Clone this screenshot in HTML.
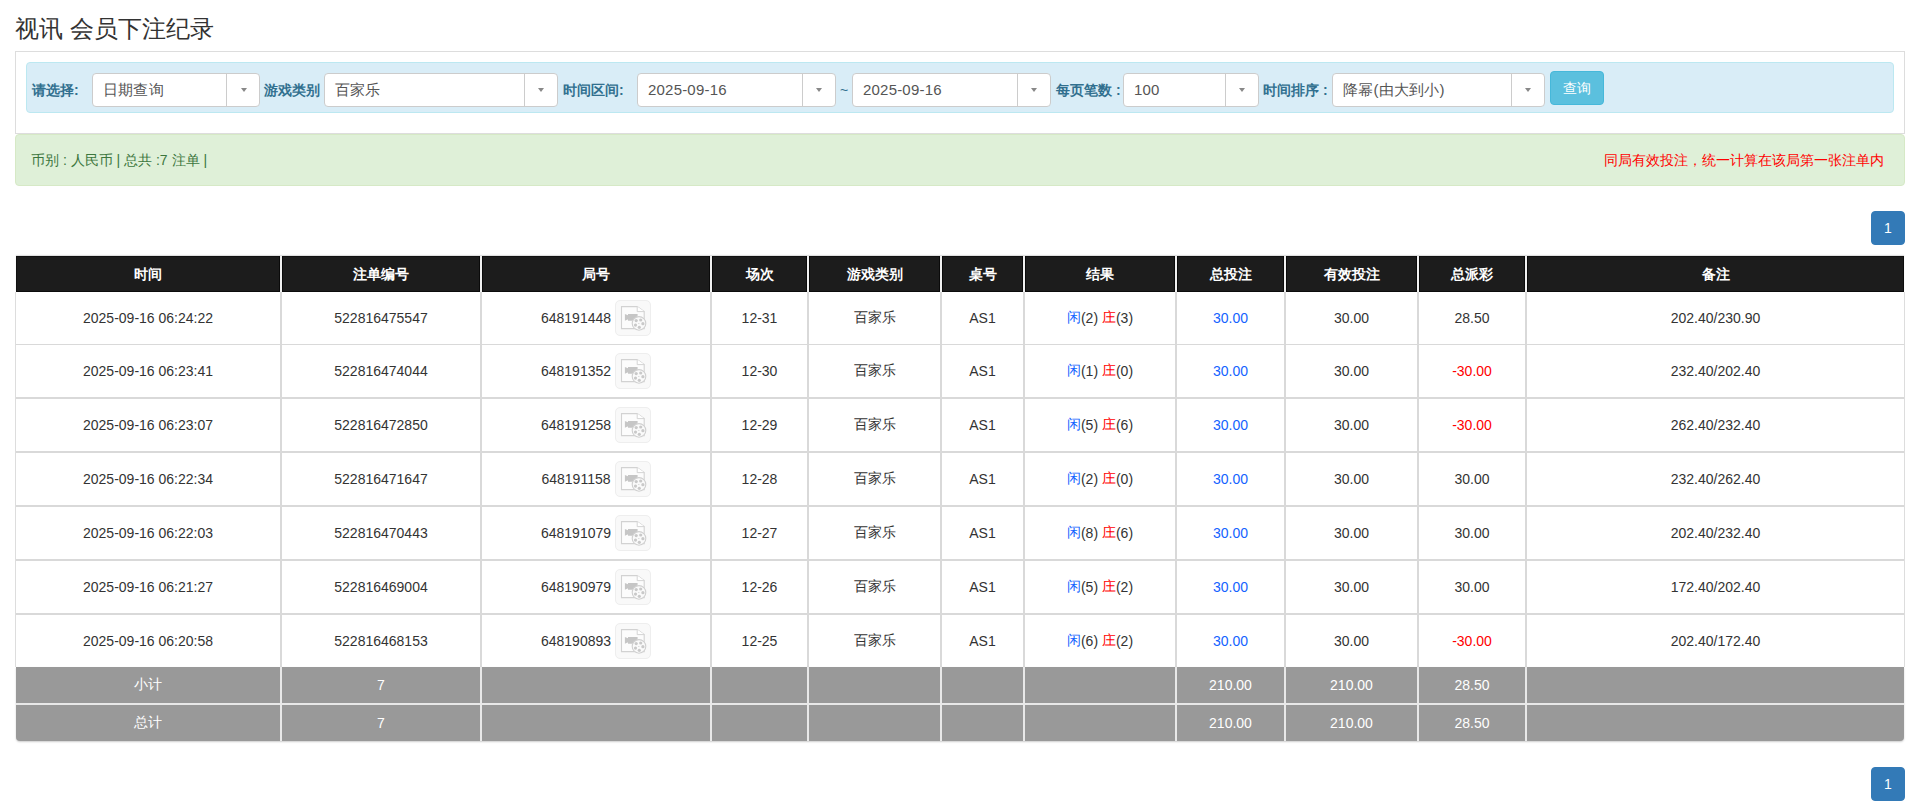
<!DOCTYPE html>
<html><head><meta charset="utf-8">
<style>
*{box-sizing:border-box;margin:0;padding:0}
html,body{width:1919px;height:805px;overflow:hidden;background:#fff}
body{font-family:"Liberation Sans",sans-serif;font-size:14px;color:#333;position:relative}
.abs{position:absolute}
h1{position:absolute;left:15px;top:13px;font-size:24px;font-weight:normal;color:#333;line-height:32px;white-space:nowrap}
.panel{position:absolute;left:15px;top:51px;width:1890px;height:83px;border:1px solid #ddd}
.well{position:absolute;left:26px;top:62px;width:1868px;height:51px;background:#d9edf7;border:1px solid #bce8f1;border-radius:4px}
.lbl{position:absolute;top:81px;font-size:14px;font-weight:bold;color:#31708f;line-height:18px;white-space:nowrap}
.sel{position:absolute;top:73px;height:34px;background:#fff;border:1px solid #ccc;border-radius:4px}
.sel .t{position:absolute;left:10px;top:7px;font-size:15px;line-height:18px;color:#555;white-space:nowrap;letter-spacing:.2px}
.sel .d{position:absolute;top:0;bottom:0;width:1px;background:#ccc}
.sel .a{position:absolute;top:14px;width:0;height:0;border-left:3.5px solid transparent;border-right:3.5px solid transparent;border-top:4px solid #888}
.btn{position:absolute;left:1550px;top:71px;width:54px;height:34px;background:#5bc0de;border:1px solid #46b8da;border-radius:4px;color:#fff;font-size:14px;line-height:32px;text-align:center}
.alert{position:absolute;left:15px;top:134px;width:1890px;height:52px;background:#dff0d8;border:1px solid #d6e9c6;border-radius:4px}
.alert .l{position:absolute;left:15px;top:16px;font-size:14px;color:#3c763d;line-height:18px;white-space:nowrap}
.alert .r{position:absolute;right:20px;top:16px;font-size:14px;color:#ff0000;line-height:18px;white-space:nowrap}
.pg{position:absolute;left:1871px;width:34px;height:34px;background:#337ab7;border:1px solid #337ab7;border-radius:4px;color:#fff;font-size:14px;font-weight:normal;line-height:32px;text-align:center}
.thead{position:absolute;left:16px;top:256px;width:1888px;height:36px;background:#1c1c1c;border-top:1px solid #111;border-left:1px solid #111;border-bottom:1px solid #0c0c0c;border-right:1px solid #0c0c0c;box-shadow:0 -1px 1px rgba(0,0,0,.12)}
.tbody{position:absolute;left:15px;top:292px;width:1890px;height:375px;background:#fff;border-left:1px solid #ddd;border-right:1px solid #ddd}
.hl{position:absolute;left:16px;width:1888px;height:2px;background:#d9d9d9}
.vh{position:absolute;top:256px;height:36px;width:2px;background:#f0f0f0;box-shadow:-1px 0 0 #0a0a0a,1px 0 0 #0a0a0a}
.vb{position:absolute;top:292px;height:375px;width:2px;background:#d9d9d9}
.vf{position:absolute;top:667px;height:74px;width:2px;background:#e8e8e8;z-index:2}
.tfoot{position:absolute;left:16px;top:667px;width:1888px;height:74px;background:#999;border-radius:0 0 4px 4px;box-shadow:0 1px 2px rgba(0,0,0,.2)}
.fl{position:absolute;left:16px;top:703px;width:1888px;height:2px;background:#e8e8e8;z-index:2}
.c{position:absolute;display:flex;align-items:center;justify-content:center;white-space:nowrap;font-size:14px;color:#333;z-index:3}
.c.th{color:#fff;font-weight:bold;padding-top:1px}
.c.tf{color:#fff}
.b{color:#1463ff}.rd{color:#f00}
.ic{display:inline-block;width:36px;height:36px;border:1px solid #eee;border-radius:5px;background:#f9f9f9;margin-left:4px;position:relative}
.ic svg{position:absolute;left:-1px;top:-1px}
</style></head><body>
<h1>视讯 会员下注纪录</h1>
<div class="panel"></div>
<div class="well"></div>
<div class="lbl" style="left:32px">请选择:</div>
<div class="sel" style="left:92px;width:168px"><span class="t">日期查询</span><span class="d" style="left:133px"></span><span class="a" style="left:147.5px"></span></div>
<div class="lbl" style="left:264px">游戏类别</div>
<div class="sel" style="left:324px;width:234px"><span class="t">百家乐</span><span class="d" style="left:199px"></span><span class="a" style="left:213px"></span></div>
<div class="lbl" style="left:563px">时间区间:</div>
<div class="sel" style="left:637px;width:199px"><span class="t">2025-09-16</span><span class="d" style="left:164px"></span><span class="a" style="left:177.5px"></span></div>
<div class="abs" style="left:840px;top:81px;font-size:14px;line-height:18px;color:#31708f">~</div>
<div class="sel" style="left:852px;width:199px"><span class="t">2025-09-16</span><span class="d" style="left:164px"></span><span class="a" style="left:177.5px"></span></div>
<div class="lbl" style="left:1056px">每页笔数 :</div>
<div class="sel" style="left:1123px;width:136px"><span class="t">100</span><span class="d" style="left:101px"></span><span class="a" style="left:114.5px"></span></div>
<div class="lbl" style="left:1263px">时间排序 :</div>
<div class="sel" style="left:1332px;width:213px"><span class="t">降幂(由大到小)</span><span class="d" style="left:178px"></span><span class="a" style="left:191.5px"></span></div>
<div class="btn">查询</div>
<div class="alert"><span class="l">币别 : 人民币 | 总共 :7 注单 |</span><span class="r">同局有效投注，统一计算在该局第一张注单内</span></div>
<div class="pg" style="top:211px">1</div>
<div class="thead"></div>
<div class="c th" style="left:16px;top:256px;width:264px;height:36px">时间</div>
<div class="c th" style="left:282px;top:256px;width:198px;height:36px">注单编号</div>
<div class="c th" style="left:482px;top:256px;width:228px;height:36px">局号</div>
<div class="c th" style="left:712px;top:256px;width:95px;height:36px">场次</div>
<div class="c th" style="left:809px;top:256px;width:131px;height:36px">游戏类别</div>
<div class="c th" style="left:942px;top:256px;width:81px;height:36px">桌号</div>
<div class="c th" style="left:1025px;top:256px;width:150px;height:36px">结果</div>
<div class="c th" style="left:1177px;top:256px;width:107px;height:36px">总投注</div>
<div class="c th" style="left:1286px;top:256px;width:131px;height:36px">有效投注</div>
<div class="c th" style="left:1419px;top:256px;width:106px;height:36px">总派彩</div>
<div class="c th" style="left:1527px;top:256px;width:377px;height:36px">备注</div>
<div class="tbody"></div>
<div class="hl" style="top:344px;height:1px"></div>
<div class="hl" style="top:397px"></div>
<div class="hl" style="top:451px"></div>
<div class="hl" style="top:505px"></div>
<div class="hl" style="top:559px"></div>
<div class="hl" style="top:613px"></div>
<div class="vh" style="left:280px"></div>
<div class="vb" style="left:280px"></div>
<div class="vf" style="left:280px"></div>
<div class="vh" style="left:480px"></div>
<div class="vb" style="left:480px"></div>
<div class="vf" style="left:480px"></div>
<div class="vh" style="left:710px"></div>
<div class="vb" style="left:710px"></div>
<div class="vf" style="left:710px"></div>
<div class="vh" style="left:807px"></div>
<div class="vb" style="left:807px"></div>
<div class="vf" style="left:807px"></div>
<div class="vh" style="left:940px"></div>
<div class="vb" style="left:940px"></div>
<div class="vf" style="left:940px"></div>
<div class="vh" style="left:1023px"></div>
<div class="vb" style="left:1023px"></div>
<div class="vf" style="left:1023px"></div>
<div class="vh" style="left:1175px"></div>
<div class="vb" style="left:1175px"></div>
<div class="vf" style="left:1175px"></div>
<div class="vh" style="left:1284px"></div>
<div class="vb" style="left:1284px"></div>
<div class="vf" style="left:1284px"></div>
<div class="vh" style="left:1417px"></div>
<div class="vb" style="left:1417px"></div>
<div class="vf" style="left:1417px"></div>
<div class="vh" style="left:1525px"></div>
<div class="vb" style="left:1525px"></div>
<div class="vf" style="left:1525px"></div>
<div class="c" style="left:16px;top:292px;width:264px;height:52px">2025-09-16 06:24:22</div>
<div class="c" style="left:282px;top:292px;width:198px;height:52px">522816475547</div>
<div class="c" style="left:482px;top:292px;width:228px;height:52px"><span>648191448</span><span class="ic"><svg width="36" height="36" viewBox="0 0 36 36"><path d="M6.5 6.6H22.2L29.2 11.6V28.6H6.5Z" fill="#fcfcfc" stroke="#d2d2d2" stroke-width="1.1"/><path d="M22.2 6.6V11.6H29.2" fill="#fff" stroke="#d4d4d4" stroke-width="1"/><path d="M13 13.9H22.6V20.7H13Z M9.9 13.9L13 15.3V19.3L9.9 20.7Z" fill="#c6c6c6"/><circle cx="24" cy="23.4" r="6.8" fill="#fafafa" stroke="#d0d0d0" stroke-width="1.1"/><g fill="#c9c9c9"><circle cx="21.2" cy="20.6" r="1.6"/><circle cx="25.7" cy="20" r="1.6"/><circle cx="27.9" cy="23.7" r="1.6"/><circle cx="20.5" cy="25.1" r="1.6"/><circle cx="24.3" cy="27.3" r="1.6"/><rect x="23.2" y="23.1" width="1.2" height=".7"/></g></svg></span></div>
<div class="c" style="left:712px;top:292px;width:95px;height:52px">12-31</div>
<div class="c" style="left:809px;top:292px;width:131px;height:52px">百家乐</div>
<div class="c" style="left:942px;top:292px;width:81px;height:52px">AS1</div>
<div class="c" style="left:1025px;top:292px;width:150px;height:52px"><span class="b">闲</span>(2)&nbsp;<span class="rd">庄</span>(3)</div>
<div class="c" style="left:1177px;top:292px;width:107px;height:52px"><span class="b">30.00</span></div>
<div class="c" style="left:1286px;top:292px;width:131px;height:52px">30.00</div>
<div class="c" style="left:1419px;top:292px;width:106px;height:52px">28.50</div>
<div class="c" style="left:1527px;top:292px;width:377px;height:52px">202.40/230.90</div>
<div class="c" style="left:16px;top:345px;width:264px;height:51px">2025-09-16 06:23:41</div>
<div class="c" style="left:282px;top:345px;width:198px;height:51px">522816474044</div>
<div class="c" style="left:482px;top:345px;width:228px;height:51px"><span>648191352</span><span class="ic"><svg width="36" height="36" viewBox="0 0 36 36"><path d="M6.5 6.6H22.2L29.2 11.6V28.6H6.5Z" fill="#fcfcfc" stroke="#d2d2d2" stroke-width="1.1"/><path d="M22.2 6.6V11.6H29.2" fill="#fff" stroke="#d4d4d4" stroke-width="1"/><path d="M13 13.9H22.6V20.7H13Z M9.9 13.9L13 15.3V19.3L9.9 20.7Z" fill="#c6c6c6"/><circle cx="24" cy="23.4" r="6.8" fill="#fafafa" stroke="#d0d0d0" stroke-width="1.1"/><g fill="#c9c9c9"><circle cx="21.2" cy="20.6" r="1.6"/><circle cx="25.7" cy="20" r="1.6"/><circle cx="27.9" cy="23.7" r="1.6"/><circle cx="20.5" cy="25.1" r="1.6"/><circle cx="24.3" cy="27.3" r="1.6"/><rect x="23.2" y="23.1" width="1.2" height=".7"/></g></svg></span></div>
<div class="c" style="left:712px;top:345px;width:95px;height:51px">12-30</div>
<div class="c" style="left:809px;top:345px;width:131px;height:51px">百家乐</div>
<div class="c" style="left:942px;top:345px;width:81px;height:51px">AS1</div>
<div class="c" style="left:1025px;top:345px;width:150px;height:51px"><span class="b">闲</span>(1)&nbsp;<span class="rd">庄</span>(0)</div>
<div class="c" style="left:1177px;top:345px;width:107px;height:51px"><span class="b">30.00</span></div>
<div class="c" style="left:1286px;top:345px;width:131px;height:51px">30.00</div>
<div class="c" style="left:1419px;top:345px;width:106px;height:51px"><span class="rd">-30.00</span></div>
<div class="c" style="left:1527px;top:345px;width:377px;height:51px">232.40/202.40</div>
<div class="c" style="left:16px;top:399px;width:264px;height:52px">2025-09-16 06:23:07</div>
<div class="c" style="left:282px;top:399px;width:198px;height:52px">522816472850</div>
<div class="c" style="left:482px;top:399px;width:228px;height:52px"><span>648191258</span><span class="ic"><svg width="36" height="36" viewBox="0 0 36 36"><path d="M6.5 6.6H22.2L29.2 11.6V28.6H6.5Z" fill="#fcfcfc" stroke="#d2d2d2" stroke-width="1.1"/><path d="M22.2 6.6V11.6H29.2" fill="#fff" stroke="#d4d4d4" stroke-width="1"/><path d="M13 13.9H22.6V20.7H13Z M9.9 13.9L13 15.3V19.3L9.9 20.7Z" fill="#c6c6c6"/><circle cx="24" cy="23.4" r="6.8" fill="#fafafa" stroke="#d0d0d0" stroke-width="1.1"/><g fill="#c9c9c9"><circle cx="21.2" cy="20.6" r="1.6"/><circle cx="25.7" cy="20" r="1.6"/><circle cx="27.9" cy="23.7" r="1.6"/><circle cx="20.5" cy="25.1" r="1.6"/><circle cx="24.3" cy="27.3" r="1.6"/><rect x="23.2" y="23.1" width="1.2" height=".7"/></g></svg></span></div>
<div class="c" style="left:712px;top:399px;width:95px;height:52px">12-29</div>
<div class="c" style="left:809px;top:399px;width:131px;height:52px">百家乐</div>
<div class="c" style="left:942px;top:399px;width:81px;height:52px">AS1</div>
<div class="c" style="left:1025px;top:399px;width:150px;height:52px"><span class="b">闲</span>(5)&nbsp;<span class="rd">庄</span>(6)</div>
<div class="c" style="left:1177px;top:399px;width:107px;height:52px"><span class="b">30.00</span></div>
<div class="c" style="left:1286px;top:399px;width:131px;height:52px">30.00</div>
<div class="c" style="left:1419px;top:399px;width:106px;height:52px"><span class="rd">-30.00</span></div>
<div class="c" style="left:1527px;top:399px;width:377px;height:52px">262.40/232.40</div>
<div class="c" style="left:16px;top:453px;width:264px;height:52px">2025-09-16 06:22:34</div>
<div class="c" style="left:282px;top:453px;width:198px;height:52px">522816471647</div>
<div class="c" style="left:482px;top:453px;width:228px;height:52px"><span>648191158</span><span class="ic"><svg width="36" height="36" viewBox="0 0 36 36"><path d="M6.5 6.6H22.2L29.2 11.6V28.6H6.5Z" fill="#fcfcfc" stroke="#d2d2d2" stroke-width="1.1"/><path d="M22.2 6.6V11.6H29.2" fill="#fff" stroke="#d4d4d4" stroke-width="1"/><path d="M13 13.9H22.6V20.7H13Z M9.9 13.9L13 15.3V19.3L9.9 20.7Z" fill="#c6c6c6"/><circle cx="24" cy="23.4" r="6.8" fill="#fafafa" stroke="#d0d0d0" stroke-width="1.1"/><g fill="#c9c9c9"><circle cx="21.2" cy="20.6" r="1.6"/><circle cx="25.7" cy="20" r="1.6"/><circle cx="27.9" cy="23.7" r="1.6"/><circle cx="20.5" cy="25.1" r="1.6"/><circle cx="24.3" cy="27.3" r="1.6"/><rect x="23.2" y="23.1" width="1.2" height=".7"/></g></svg></span></div>
<div class="c" style="left:712px;top:453px;width:95px;height:52px">12-28</div>
<div class="c" style="left:809px;top:453px;width:131px;height:52px">百家乐</div>
<div class="c" style="left:942px;top:453px;width:81px;height:52px">AS1</div>
<div class="c" style="left:1025px;top:453px;width:150px;height:52px"><span class="b">闲</span>(2)&nbsp;<span class="rd">庄</span>(0)</div>
<div class="c" style="left:1177px;top:453px;width:107px;height:52px"><span class="b">30.00</span></div>
<div class="c" style="left:1286px;top:453px;width:131px;height:52px">30.00</div>
<div class="c" style="left:1419px;top:453px;width:106px;height:52px">30.00</div>
<div class="c" style="left:1527px;top:453px;width:377px;height:52px">232.40/262.40</div>
<div class="c" style="left:16px;top:507px;width:264px;height:52px">2025-09-16 06:22:03</div>
<div class="c" style="left:282px;top:507px;width:198px;height:52px">522816470443</div>
<div class="c" style="left:482px;top:507px;width:228px;height:52px"><span>648191079</span><span class="ic"><svg width="36" height="36" viewBox="0 0 36 36"><path d="M6.5 6.6H22.2L29.2 11.6V28.6H6.5Z" fill="#fcfcfc" stroke="#d2d2d2" stroke-width="1.1"/><path d="M22.2 6.6V11.6H29.2" fill="#fff" stroke="#d4d4d4" stroke-width="1"/><path d="M13 13.9H22.6V20.7H13Z M9.9 13.9L13 15.3V19.3L9.9 20.7Z" fill="#c6c6c6"/><circle cx="24" cy="23.4" r="6.8" fill="#fafafa" stroke="#d0d0d0" stroke-width="1.1"/><g fill="#c9c9c9"><circle cx="21.2" cy="20.6" r="1.6"/><circle cx="25.7" cy="20" r="1.6"/><circle cx="27.9" cy="23.7" r="1.6"/><circle cx="20.5" cy="25.1" r="1.6"/><circle cx="24.3" cy="27.3" r="1.6"/><rect x="23.2" y="23.1" width="1.2" height=".7"/></g></svg></span></div>
<div class="c" style="left:712px;top:507px;width:95px;height:52px">12-27</div>
<div class="c" style="left:809px;top:507px;width:131px;height:52px">百家乐</div>
<div class="c" style="left:942px;top:507px;width:81px;height:52px">AS1</div>
<div class="c" style="left:1025px;top:507px;width:150px;height:52px"><span class="b">闲</span>(8)&nbsp;<span class="rd">庄</span>(6)</div>
<div class="c" style="left:1177px;top:507px;width:107px;height:52px"><span class="b">30.00</span></div>
<div class="c" style="left:1286px;top:507px;width:131px;height:52px">30.00</div>
<div class="c" style="left:1419px;top:507px;width:106px;height:52px">30.00</div>
<div class="c" style="left:1527px;top:507px;width:377px;height:52px">202.40/232.40</div>
<div class="c" style="left:16px;top:561px;width:264px;height:52px">2025-09-16 06:21:27</div>
<div class="c" style="left:282px;top:561px;width:198px;height:52px">522816469004</div>
<div class="c" style="left:482px;top:561px;width:228px;height:52px"><span>648190979</span><span class="ic"><svg width="36" height="36" viewBox="0 0 36 36"><path d="M6.5 6.6H22.2L29.2 11.6V28.6H6.5Z" fill="#fcfcfc" stroke="#d2d2d2" stroke-width="1.1"/><path d="M22.2 6.6V11.6H29.2" fill="#fff" stroke="#d4d4d4" stroke-width="1"/><path d="M13 13.9H22.6V20.7H13Z M9.9 13.9L13 15.3V19.3L9.9 20.7Z" fill="#c6c6c6"/><circle cx="24" cy="23.4" r="6.8" fill="#fafafa" stroke="#d0d0d0" stroke-width="1.1"/><g fill="#c9c9c9"><circle cx="21.2" cy="20.6" r="1.6"/><circle cx="25.7" cy="20" r="1.6"/><circle cx="27.9" cy="23.7" r="1.6"/><circle cx="20.5" cy="25.1" r="1.6"/><circle cx="24.3" cy="27.3" r="1.6"/><rect x="23.2" y="23.1" width="1.2" height=".7"/></g></svg></span></div>
<div class="c" style="left:712px;top:561px;width:95px;height:52px">12-26</div>
<div class="c" style="left:809px;top:561px;width:131px;height:52px">百家乐</div>
<div class="c" style="left:942px;top:561px;width:81px;height:52px">AS1</div>
<div class="c" style="left:1025px;top:561px;width:150px;height:52px"><span class="b">闲</span>(5)&nbsp;<span class="rd">庄</span>(2)</div>
<div class="c" style="left:1177px;top:561px;width:107px;height:52px"><span class="b">30.00</span></div>
<div class="c" style="left:1286px;top:561px;width:131px;height:52px">30.00</div>
<div class="c" style="left:1419px;top:561px;width:106px;height:52px">30.00</div>
<div class="c" style="left:1527px;top:561px;width:377px;height:52px">172.40/202.40</div>
<div class="c" style="left:16px;top:615px;width:264px;height:52px">2025-09-16 06:20:58</div>
<div class="c" style="left:282px;top:615px;width:198px;height:52px">522816468153</div>
<div class="c" style="left:482px;top:615px;width:228px;height:52px"><span>648190893</span><span class="ic"><svg width="36" height="36" viewBox="0 0 36 36"><path d="M6.5 6.6H22.2L29.2 11.6V28.6H6.5Z" fill="#fcfcfc" stroke="#d2d2d2" stroke-width="1.1"/><path d="M22.2 6.6V11.6H29.2" fill="#fff" stroke="#d4d4d4" stroke-width="1"/><path d="M13 13.9H22.6V20.7H13Z M9.9 13.9L13 15.3V19.3L9.9 20.7Z" fill="#c6c6c6"/><circle cx="24" cy="23.4" r="6.8" fill="#fafafa" stroke="#d0d0d0" stroke-width="1.1"/><g fill="#c9c9c9"><circle cx="21.2" cy="20.6" r="1.6"/><circle cx="25.7" cy="20" r="1.6"/><circle cx="27.9" cy="23.7" r="1.6"/><circle cx="20.5" cy="25.1" r="1.6"/><circle cx="24.3" cy="27.3" r="1.6"/><rect x="23.2" y="23.1" width="1.2" height=".7"/></g></svg></span></div>
<div class="c" style="left:712px;top:615px;width:95px;height:52px">12-25</div>
<div class="c" style="left:809px;top:615px;width:131px;height:52px">百家乐</div>
<div class="c" style="left:942px;top:615px;width:81px;height:52px">AS1</div>
<div class="c" style="left:1025px;top:615px;width:150px;height:52px"><span class="b">闲</span>(6)&nbsp;<span class="rd">庄</span>(2)</div>
<div class="c" style="left:1177px;top:615px;width:107px;height:52px"><span class="b">30.00</span></div>
<div class="c" style="left:1286px;top:615px;width:131px;height:52px">30.00</div>
<div class="c" style="left:1419px;top:615px;width:106px;height:52px"><span class="rd">-30.00</span></div>
<div class="c" style="left:1527px;top:615px;width:377px;height:52px">202.40/172.40</div>
<div class="tfoot"></div><div class="fl"></div>
<div class="c tf" style="left:16px;top:667px;width:264px;height:36px">小计</div>
<div class="c tf" style="left:282px;top:667px;width:198px;height:36px">7</div>
<div class="c tf" style="left:1177px;top:667px;width:107px;height:36px">210.00</div>
<div class="c tf" style="left:1286px;top:667px;width:131px;height:36px">210.00</div>
<div class="c tf" style="left:1419px;top:667px;width:106px;height:36px">28.50</div>
<div class="c tf" style="left:16px;top:705px;width:264px;height:36px">总计</div>
<div class="c tf" style="left:282px;top:705px;width:198px;height:36px">7</div>
<div class="c tf" style="left:1177px;top:705px;width:107px;height:36px">210.00</div>
<div class="c tf" style="left:1286px;top:705px;width:131px;height:36px">210.00</div>
<div class="c tf" style="left:1419px;top:705px;width:106px;height:36px">28.50</div>
<div class="pg" style="top:767px">1</div>
</body></html>
